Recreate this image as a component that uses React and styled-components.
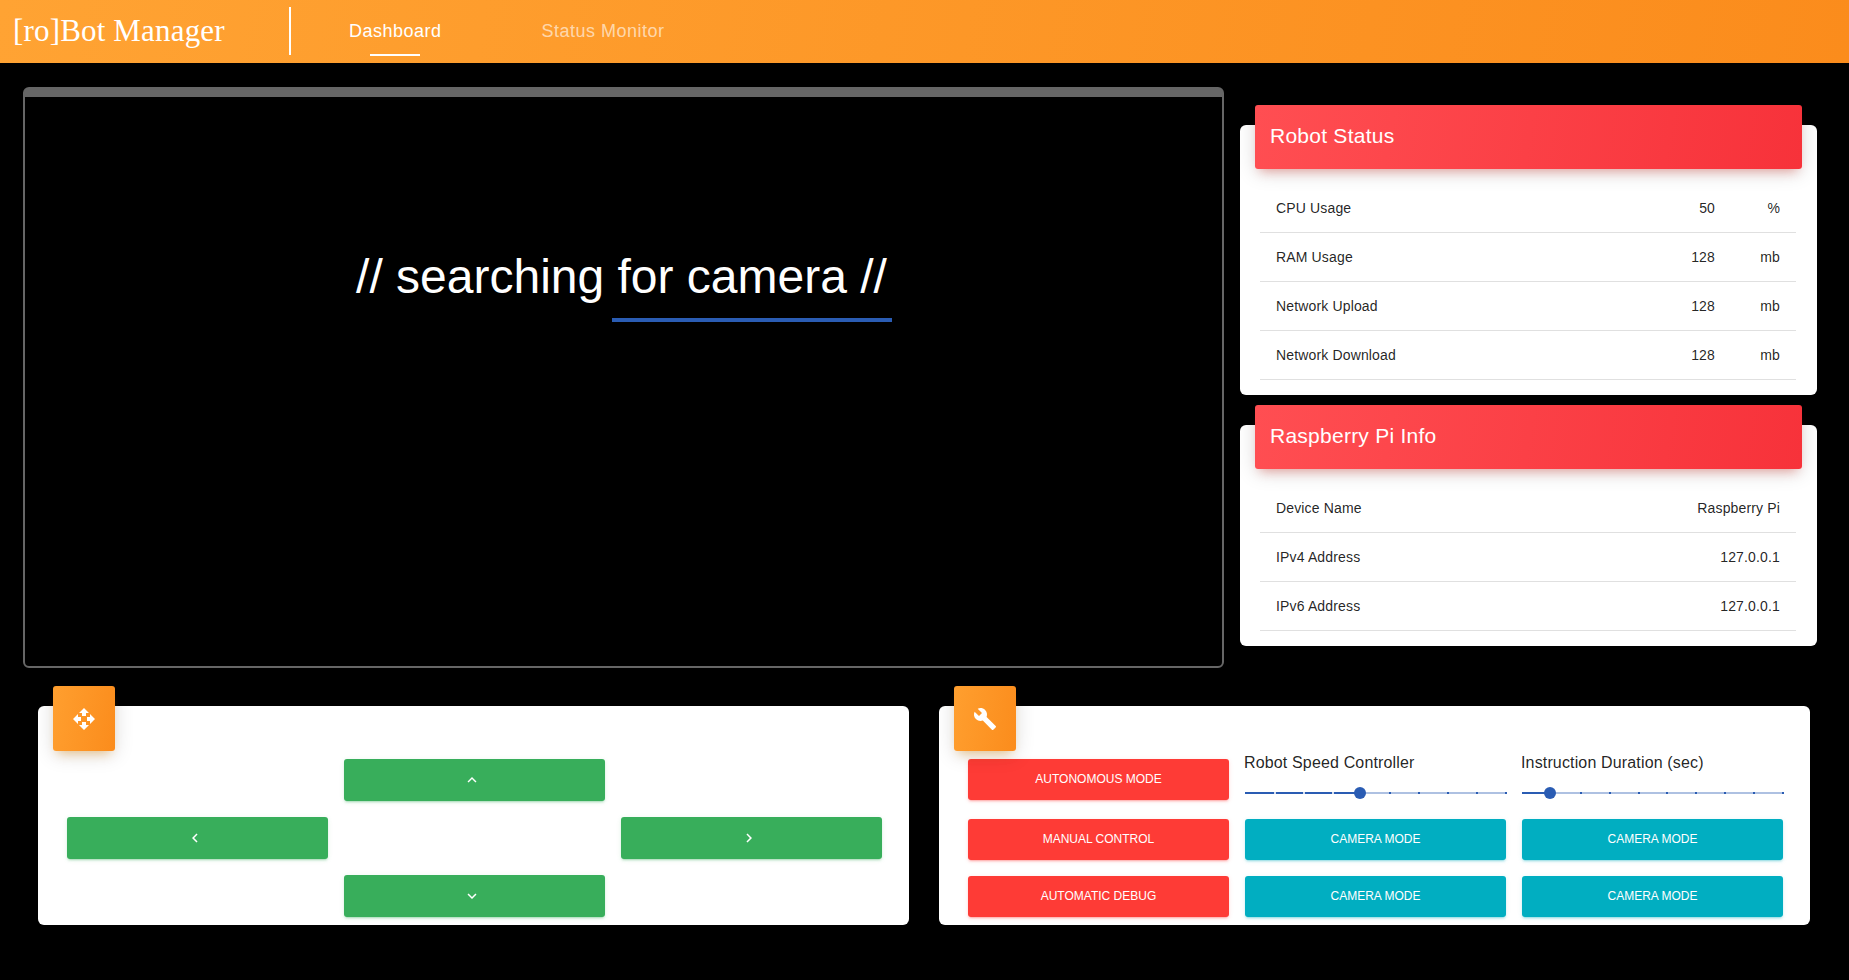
import React from "react";
import styled, { createGlobalStyle } from "styled-components";

const Global = createGlobalStyle`
  html, body { margin: 0; padding: 0; background: #000; }
  body { font-family: "Liberation Sans", Arial, sans-serif; width: 1849px; height: 980px; overflow: hidden; }
  * { box-sizing: border-box; }
`;

const AppBar = styled.header`
  height: 63px;
  display: flex;
  align-items: center;
  background: linear-gradient(100deg, #ffa333 0%, #fb8c1c 100%);
  color: #fff;
`;
const Brand = styled.div`
  font-family: "Liberation Serif", serif;
  font-size: 31px;
  letter-spacing: 0.17px;
  width: 289px;
  padding-left: 13px;
  margin-top: -2px;
  white-space: nowrap;
`;
const Divider = styled.div`
  width: 2px;
  height: 48px;
  margin-top: -1px;
  background: #fff;
`;
const Tab = styled.div`
  position: relative;
  margin-left: ${(p) => p.$offset}px;
  font-size: 18px;
  letter-spacing: 0.5px;
  line-height: 24px;
  margin-top: -2px;
  color: ${(p) => (p.$active ? "#fff" : "rgba(255,255,255,0.62)")};
  ${(p) =>
    p.$active &&
    `&::after {
      content: "";
      position: absolute;
      left: 21px;
      right: 22px;
      top: 35px;
      height: 2px;
      background: #fff;
    }`}
`;

const Main = styled.main`
  padding: 24px 32px 0 23px;
`;
const TopRow = styled.section`
  display: flex;
  gap: 16px;
  align-items: flex-start;
`;
const Camera = styled.div`
  width: 1201px;
  height: 581px;
  border: 2px solid #666;
  border-top-width: 10px;
  border-radius: 6px;
  background: #000;
  padding-top: 152px;
  color: #fff;
`;
const CameraText = styled.div`
  font-size: 48px;
  line-height: 56px;
  text-align: center;
  padding-right: 4px;
`;
const CameraBar = styled.div`
  width: 280px;
  height: 4px;
  margin: 13px 0 0 587px;
  background: #2a5cb3;
`;
const SideColumn = styled.aside`
  width: 577px;
  padding-top: 38px;
  display: flex;
  flex-direction: column;
  gap: 30px;
`;
const InfoCard = styled.div`
  background: #fff;
  border-radius: 6px;
  padding-bottom: ${(p) => p.$bottom}px;
`;
const CardHeader = styled.div`
  height: 64px;
  margin: -20px 15px 0;
  padding: 0 0 2px 15px;
  display: flex;
  align-items: center;
  border-radius: 3px;
  background: linear-gradient(100deg, #ff4e52 0%, #f7323a 100%);
  box-shadow: 0 4px 20px rgba(0, 0, 0, 0.14), 0 7px 10px -5px rgba(244, 67, 54, 0.4);
  color: #fff;
  font-size: 21px;
  letter-spacing: 0.25px;
`;
const Rows = styled.div`
  margin: 15px 21px 0 20px;
`;
const Row = styled.div`
  height: 49px;
  padding: 0 16px;
  display: grid;
  grid-template-columns: ${(p) => (p.$units ? "1fr auto 65px" : "1fr auto")};
  align-items: center;
  border-bottom: 1px solid #e0e0e0;
  font-size: 14px;
  letter-spacing: 0.15px;
  color: rgba(0, 0, 0, 0.87);
`;
const Cell = styled.span`
  text-align: ${(p) => (p.$right ? "right" : "left")};
`;

const BottomRow = styled.section`
  display: flex;
  gap: 30px;
  margin: 38px 0 0 15px;
`;
const PanelCard = styled.div`
  width: 871px;
  height: 219px;
  background: #fff;
  border-radius: 6px;
`;
const IconBox = styled.div`
  width: 62px;
  height: 65px;
  margin: -20px 0 0 15px;
  border-radius: 3px;
  display: flex;
  align-items: center;
  justify-content: center;
  background: linear-gradient(100deg, #ff9f2f 0%, #fb8c1c 100%);
  box-shadow: 0 4px 20px rgba(0, 0, 0, 0.14), 0 7px 10px -5px rgba(255, 152, 0, 0.4);
  position: relative;
`;
const Pad = styled.div`
  display: grid;
  grid-template-columns: repeat(3, 261px);
  grid-template-rows: repeat(3, 42px);
  gap: 16px;
  margin: 8px 0 0 29px;
`;
const Button = styled.button`
  border: 0;
  border-radius: 3px;
  height: ${(p) => p.$h || 42}px;
  margin-top: ${(p) => p.$top || 0}px;
  padding: 0 0 2px;
  display: flex;
  align-items: center;
  justify-content: center;
  background: ${(p) => p.$color};
  color: #fff;
  font-family: inherit;
  font-size: 12px;
  text-transform: uppercase;
  box-shadow: 0 2px 2px ${(p) => p.$color}24, 0 3px 1px -2px ${(p) => p.$color}33, 0 1px 5px ${(p) => p.$color}1f;
  grid-column: ${(p) => p.$col || "auto"};
  grid-row: ${(p) => p.$row || "auto"};
`;
const Chevron = styled.svg`
  width: 18px;
  height: 18px;
  fill: #fff;
  margin: 2px 6px 0 0;
`;
const Controls = styled.div`
  display: grid;
  grid-template-columns: repeat(3, 261px);
  grid-template-rows: 52px 41px 41px;
  column-gap: 16px;
  row-gap: 16px;
  margin-left: 29px;
`;
const SliderCell = styled.div`
  display: flex;
  flex-direction: column;
  padding-top: 1px;
`;
const SliderLabel = styled.div`
  font-size: 16px;
  line-height: 22px;
  letter-spacing: 0.15px;
  margin-left: -1px;
  white-space: nowrap;
  color: rgba(0, 0, 0, 0.87);
`;
const SliderTrack = styled.div`
  position: relative;
  height: 2px;
  margin: 18px -1px 0 0;
  background: rgba(42, 92, 179, 0.38);
`;
const SliderFill = styled.div`
  position: absolute;
  left: 0;
  top: 0;
  bottom: 0;
  background: #2a5cb3;
`;
const SliderMarks = styled.div`
  position: absolute;
  inset: 0;
  display: flex;
  justify-content: space-between;
`;
const SliderMark = styled.span`
  width: 2px;
  height: 2px;
  background: ${(p) => (p.$on ? "rgba(255,255,255,0.8)" : "#2a5cb3")};
`;
const SliderThumb = styled.div`
  position: absolute;
  top: -5px;
  width: 12px;
  height: 12px;
  margin-left: -7px;
  border-radius: 50%;
  background: #2a5cb3;
`;

const GREEN = "#38ae5b";
const RED = "#fe3b36";
const CYAN = "#01aec1";

const statusRows = [
  ["CPU Usage", "50", "%"],
  ["RAM Usage", "128", "mb"],
  ["Network Upload", "128", "mb"],
  ["Network Download", "128", "mb"],
];
const piRows = [
  ["Device Name", "Raspberry Pi"],
  ["IPv4 Address", "127.0.0.1"],
  ["IPv6 Address", "127.0.0.1"],
];
const STEPS = 10;

function Slider({ label, value }) {
  const pct = (value / (STEPS - 1)) * 100;
  return (
    <SliderCell>
      <SliderLabel>{label}</SliderLabel>
      <SliderTrack>
        <SliderFill style={{ width: `${pct}%` }} />
        <SliderMarks>
          {Array.from({ length: STEPS }, (_, i) => (
            <SliderMark key={i} $on={i > 0 && i < value} />
          ))}
        </SliderMarks>
        <SliderThumb style={{ left: `${pct}%` }} />
      </SliderTrack>
    </SliderCell>
  );
}

const chevrons = {
  up: "M7.41 15.41L12 10.83l4.59 4.58L18 14l-6-6-6 6z",
  down: "M7.41 8.59L12 13.17l4.59-4.58L18 10l-6 6-6-6z",
  left: "M15.41 16.59L10.83 12l4.58-4.59L14 6l-6 6 6 6z",
  right: "M8.59 16.59L13.17 12 8.59 7.41 10 6l6 6-6 6z",
};
const Arrow = ({ dir, col, row }) => (
  <Button $color={GREEN} $col={col} $row={row} aria-label={dir}>
    <Chevron viewBox="0 0 24 24"><path d={chevrons[dir]} /></Chevron>
  </Button>
);

export default function App() {
  return (
    <>
      <Global />
      <AppBar>
        <Brand>[ro]Bot Manager</Brand>
        <Divider />
        <Tab $active $offset={58}>Dashboard</Tab>
        <Tab $offset={100}>Status Monitor</Tab>
      </AppBar>
      <Main>
        <TopRow>
          <Camera>
            <CameraText>// searching for camera //</CameraText>
            <CameraBar />
          </Camera>
          <SideColumn>
            <InfoCard $bottom={15}>
              <CardHeader>Robot Status</CardHeader>
              <Rows>
                {statusRows.map(([name, val, unit]) => (
                  <Row key={name} $units>
                    <Cell>{name}</Cell>
                    <Cell $right>{val}</Cell>
                    <Cell $right>{unit}</Cell>
                  </Row>
                ))}
              </Rows>
            </InfoCard>
            <InfoCard $bottom={15}>
              <CardHeader>Raspberry Pi Info</CardHeader>
              <Rows>
                {piRows.map(([name, val]) => (
                  <Row key={name}>
                    <Cell>{name}</Cell>
                    <Cell $right>{val}</Cell>
                  </Row>
                ))}
              </Rows>
            </InfoCard>
          </SideColumn>
        </TopRow>
        <BottomRow>
          <PanelCard>
            <IconBox>
              <svg width="24" height="24" viewBox="0 0 24 24" fill="#fff">
                <path d="M10 9h4V6h3l-5-5-5 5h3v3zm-1 1H6V7l-5 5 5 5v-3h3v-4zm14 2l-5-5v3h-3v4h3v3l5-5zm-9 3h-4v3H7l5 5 5-5h-3v-3z" />
              </svg>
            </IconBox>
            <Pad>
              <Arrow dir="up" col="2" row="1" />
              <Arrow dir="left" col="1" row="2" />
              <Arrow dir="right" col="3" row="2" />
              <Arrow dir="down" col="2" row="3" />
            </Pad>
          </PanelCard>
          <PanelCard>
            <IconBox>
              <svg width="24" height="24" viewBox="0 0 24 24" fill="#fff">
                <path d="M22.7 19l-9.1-9.1c.9-2.3.4-5-1.5-6.9-2-2-5-2.4-7.4-1.3L9 6 6 9 1.6 4.7C.4 7.1.9 10.1 2.9 12.1c1.9 1.9 4.6 2.4 6.9 1.5l9.1 9.1c.4.4 1 .4 1.4 0l2.3-2.3c.5-.4.5-1.1.1-1.4z" />
              </svg>
            </IconBox>
            <Controls>
              <Button $color={RED} $h={41} $top={8} $col="1" $row="1">Autonomous Mode</Button>
              <Slider label="Robot Speed Controller" value={4} />
              <Slider label="Instruction Duration (sec)" value={1} />
              <Button $color={RED} $h={41}>Manual Control</Button>
              <Button $color={CYAN} $h={41}>Camera Mode</Button>
              <Button $color={CYAN} $h={41}>Camera Mode</Button>
              <Button $color={RED} $h={41}>Automatic Debug</Button>
              <Button $color={CYAN} $h={41}>Camera Mode</Button>
              <Button $color={CYAN} $h={41}>Camera Mode</Button>
            </Controls>
          </PanelCard>
        </BottomRow>
      </Main>
    </>
  );
}
